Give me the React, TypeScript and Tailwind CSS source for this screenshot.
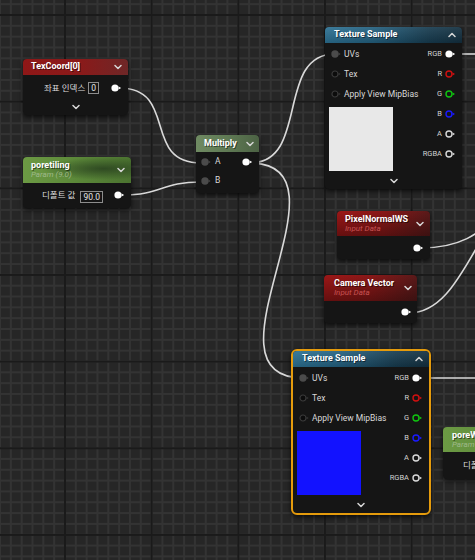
import type { ReactNode } from 'react';

type PinKind = 'out' | 'in' | 'open' | 'ring';

function Pin({ kind, color = '#ffffff' }: { kind: PinKind; color?: string }) {
  if (kind === 'out') {
    return (
      <svg width="11" height="8" viewBox="0 0 11 8" className="shrink-0">
        <circle cx="4" cy="4" r="3.6" fill="#ffffff" />
        <path d="M7.6 2.4 L10.2 4 L7.6 5.6 Z" fill="#ffffff" />
      </svg>
    );
  }
  if (kind === 'ring') {
    return (
      <svg width="11" height="8" viewBox="0 0 11 8" className="shrink-0">
        <circle cx="4" cy="4" r="3" fill="none" stroke={color} strokeWidth="1.4" />
        <path d="M7.6 2.6 L10 4 L7.6 5.4 Z" fill={color} />
      </svg>
    );
  }
  if (kind === 'in') {
    return (
      <svg width="11" height="8" viewBox="0 0 11 8" className="shrink-0">
        <circle cx="4" cy="4" r="3.7" fill="#4b4b4b" />
        <path d="M7.6 2.8 L9.6 4 L7.6 5.2 Z" fill="#4b4b4b" />
      </svg>
    );
  }
  return (
    <svg width="11" height="8" viewBox="0 0 11 8" className="shrink-0">
      <circle cx="4" cy="4" r="3" fill="#0c0c0c" stroke="#3a3a3a" strokeWidth="1.2" />
      <path d="M7.6 2.8 L9.6 4 L7.6 5.2 Z" fill="#3a3a3a" />
    </svg>
  );
}

function Chevron({ up = false }: { up?: boolean }) {
  return (
    <svg width="8" height="6" viewBox="0 0 8 6" className="shrink-0">
      <path
        d={up ? 'M1 4.5 L4 1.5 L7 4.5' : 'M1 1.5 L4 4.5 L7 1.5'}
        fill="none"
        stroke="#d6d6d6"
        strokeWidth="1.5"
        strokeLinecap="round"
        strokeLinejoin="round"
      />
    </svg>
  );
}

function ValueBox({ children }: { children: ReactNode }) {
  return (
    <span className="ml-[3px] border border-[#8d8d8d] px-[2px] text-[8.5px] leading-[10px] text-[#e6e6e6]">
      {children}
    </span>
  );
}

function InRow({ kind, label }: { kind: PinKind; label: string }) {
  return (
    <div className="flex h-[20px] items-center gap-[2px]">
      <Pin kind={kind} />
      <span className="text-[8.5px] text-[#d8d8d8]">{label}</span>
    </div>
  );
}

function OutRow({ label, kind, color }: { label: string; kind: PinKind; color?: string }) {
  return (
    <div className="flex h-[20px] items-center justify-end gap-[3px]">
      <span className="text-[7.5px] text-[#d2d2d2]">{label}</span>
      <Pin kind={kind} color={color} />
    </div>
  );
}

function TextureSample({ preview }: { preview: string }) {
  return (
    <div className="flex h-full flex-col">
      <div className="flex h-[16px] shrink-0 items-center justify-between rounded-t-[4px] bg-[linear-gradient(180deg,rgba(255,255,255,0.08)_0%,rgba(0,0,0,0.15)_100%),linear-gradient(90deg,#2c7193_0%,#23607f_35%,#173c50_75%,#132f3f_100%)] pl-[9px] pr-[6px]">
        <span className="text-[9px] font-bold text-white [text-shadow:1px_1px_0_rgba(0,0,0,.5)]">Texture Sample</span>
        <Chevron up />
      </div>
      <div className="flex justify-between pt-px pr-[6px]">
        <div className="flex flex-col pl-[6px]">
          <InRow kind="in" label="UVs" />
          <InRow kind="open" label="Tex" />
          <InRow kind="open" label="Apply View MipBias" />
          <div className={`-ml-[2px] mt-[3px] h-[64px] w-[64px] ${preview}`} />
        </div>
        <div className="flex flex-col">
          <OutRow label="RGB" kind="out" />
          <OutRow label="R" kind="ring" color="#d01010" />
          <OutRow label="G" kind="ring" color="#10c410" />
          <OutRow label="B" kind="ring" color="#1a1aff" />
          <OutRow label="A" kind="ring" color="#d8d8d8" />
          <OutRow label="RGBA" kind="ring" color="#d8d8d8" />
        </div>
      </div>
      <div className="flex flex-1 items-center justify-center pt-px">
        <Chevron />
      </div>
    </div>
  );
}

const nodeBase =
  'absolute flex flex-col rounded-[4px] bg-[#151515] shadow-[0_2px_5px_rgba(0,0,0,0.7)]';

export default function App() {
  return (
    <div
      className="relative h-[560px] w-[475px] overflow-hidden bg-[#262626] [background-image:linear-gradient(90deg,#1a1a1a_2px,transparent_2px),linear-gradient(#1a1a1a_2px,transparent_2px),linear-gradient(90deg,#333333_2px,transparent_2px),linear-gradient(#333333_2px,transparent_2px)] [background-size:86.667px_86.667px,86.667px_86.667px,10.833px_10.833px,10.833px_10.833px] [background-position:64px_14px] font-['Roboto','Noto_Sans_CJK_KR',sans-serif]"
    >
      {/* wires */}
      <svg className="absolute inset-0" width="475" height="560" viewBox="0 0 475 560" fill="none">
        <g stroke="#d9d9d9" strokeWidth="1.6" fill="none">
          <path d="M119 88 C179 88 141 163 201 163" />
          <path d="M122 195 C162 195 161 182 201 182" />
          <path d="M250 163 C310 163 275 54 335 54" />
          <path d="M250 163 C360 163 193 378 303 378" />
          <path d="M421 248 C501 248 491 188 571 188" />
          <path d="M409 313 C469 313 480 190 540 190" />
          <path d="M452 54 L480 54" />
          <path d="M421 378 L480 378" />
        </g>
      </svg>

      {/* TexCoord[0] */}
      <div className={`${nodeBase} left-[23px] top-[59px] h-[56px] w-[105px]`}>
        <div className="flex h-[16px] items-center justify-between rounded-t-[4px] bg-[linear-gradient(90deg,#8f1717_0%,#8a1a1a_55%,#6e2727_100%)] pl-[8px] pr-[6px]">
          <span className="text-[9px] font-bold text-white [text-shadow:1px_1px_0_rgba(0,0,0,.5)]">TexCoord[0]</span>
          <Chevron />
        </div>
        <div className="mt-[3px] flex h-[20px] items-center justify-end pr-[6px]">
          <span className="text-[8.5px] text-[#dcdcdc]">좌표 인덱스</span>
          <ValueBox>0</ValueBox>
          <span className="ml-[12px] flex">
            <Pin kind="out" />
          </span>
        </div>
        <div className="flex flex-1 items-center justify-center">
          <Chevron />
        </div>
      </div>

      {/* poretiling */}
      <div className={`${nodeBase} left-[23px] top-[157px] h-[51px] w-[108px]`}>
        <div className="flex h-[26px] items-center justify-between rounded-t-[4px] bg-[radial-gradient(ellipse_at_75%_45%,#2f4a22_0%,transparent_55%),linear-gradient(90deg,#6c9a44_0%,#5d8a3a_45%,#4b7330_100%)] pl-[8px] pr-[6px]">
          <div className="flex flex-col leading-[10px]">
            <span className="text-[9px] font-bold text-white [text-shadow:1px_1px_0_rgba(0,0,0,.5)]">poretiling</span>
            <span className="text-[8px] italic text-[#9fb98a]">Param (9.0)</span>
          </div>
          <Chevron />
        </div>
        <div className="mt-[2px] flex h-[20px] items-center justify-end pr-[6px]">
          <span className="text-[8.5px] text-[#dcdcdc]">디폴트 값</span>
          <span className="ml-[2px]">
            <ValueBox>90.0</ValueBox>
          </span>
          <span className="ml-[11px] flex">
            <Pin kind="out" />
          </span>
        </div>
      </div>

      {/* Multiply */}
      <div className={`${nodeBase} left-[196px] top-[135px] h-[58px] w-[63px]`}>
        <div className="flex h-[17px] items-center justify-between rounded-t-[4px] bg-[linear-gradient(90deg,#6f8a62_0%,#5f7a54_50%,#4c6244_100%)] pl-[8px] pr-[5px]">
          <span className="text-[9px] font-bold text-white [text-shadow:1px_1px_0_rgba(0,0,0,.5)]">Multiply</span>
          <Chevron />
        </div>
        <div className="flex justify-between pl-[5px] pr-[6px]">
          <div className="flex flex-col">
            <div className="flex h-[19px] items-center gap-[3px]">
              <Pin kind="in" />
              <span className="text-[8.5px] text-[#d8d8d8]">A</span>
            </div>
            <div className="flex h-[19px] items-center gap-[3px]">
              <Pin kind="in" />
              <span className="text-[8.5px] text-[#d8d8d8]">B</span>
            </div>
          </div>
          <div className="flex h-[19px] items-center">
            <Pin kind="out" />
          </div>
        </div>
      </div>

      {/* Texture Sample (top) */}
      <div className={`${nodeBase} left-[325px] top-[27px] h-[162px] w-[137px]`}>
        <TextureSample preview="bg-[#e8e8e8]" />
      </div>

      {/* PixelNormalWS */}
      <div className={`${nodeBase} left-[337px] top-[211px] h-[48px] w-[93px]`}>
        <div className="flex h-[25px] items-center justify-between rounded-t-[4px] bg-[linear-gradient(180deg,rgba(0,0,0,0)_0%,rgba(0,0,0,0.35)_100%),linear-gradient(90deg,#9c1717_0%,#8a1818_50%,#5a1a1a_100%)] pl-[8px] pr-[6px]">
          <div className="flex flex-col leading-[10px]">
            <span className="text-[9px] font-bold text-white [text-shadow:1px_1px_0_rgba(0,0,0,.5)]">PixelNormalWS</span>
            <span className="text-[8px] italic text-[#c75252]">Input Data</span>
          </div>
          <Chevron />
        </div>
        <div className="flex flex-1 items-center justify-end pr-[6px]">
          <Pin kind="out" />
        </div>
      </div>

      {/* Camera Vector */}
      <div className={`${nodeBase} left-[324px] top-[275px] h-[48px] w-[93px]`}>
        <div className="flex h-[26px] items-center justify-between rounded-t-[4px] bg-[linear-gradient(180deg,rgba(0,0,0,0)_0%,rgba(0,0,0,0.35)_100%),linear-gradient(90deg,#9c1717_0%,#8a1818_50%,#5a1a1a_100%)] pl-[10px] pr-[5px]">
          <div className="flex flex-col leading-[10px]">
            <span className="text-[9px] font-bold text-white [text-shadow:1px_1px_0_rgba(0,0,0,.5)]">Camera Vector</span>
            <span className="text-[8px] italic text-[#c75252]">Input Data</span>
          </div>
          <Chevron />
        </div>
        <div className="flex flex-1 items-center justify-end pr-[5px]">
          <Pin kind="out" />
        </div>
      </div>

      {/* Texture Sample (bottom, selected) */}
      <div className="absolute left-[291px] top-[349px] h-[166px] w-[140px] rounded-[6px] border-2 border-[#e59b0c] bg-[#151515] shadow-[0_2px_5px_rgba(0,0,0,0.7)]">
        <TextureSample preview="bg-[#1212ff]" />
      </div>

      {/* poreW... (runs past the right edge) */}
      <div className={`${nodeBase} left-[443px] top-[427px] h-[52px] w-[100px]`}>
        <div className="flex h-[25px] items-center rounded-t-[4px] bg-[linear-gradient(90deg,#6c9a44_0%,#5d8a3a_60%,#4b7330_100%)] pl-[9px]">
          <div className="flex flex-col leading-[10px]">
            <span className="text-[9px] font-bold text-white [text-shadow:1px_1px_0_rgba(0,0,0,.5)]">poreWidth</span>
            <span className="text-[8px] italic text-[#9fb98a]">Param (1.0)</span>
          </div>
        </div>
        <div className="flex flex-1 items-center pl-[20px]">
          <span className="text-[8.5px] text-[#dcdcdc]">디폴트 값</span>
        </div>
      </div>
    </div>
  );
}
